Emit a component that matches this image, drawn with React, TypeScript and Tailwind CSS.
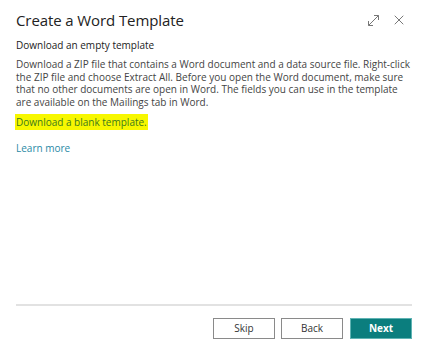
import { X } from "lucide-react";

const lines = [
  "Download a ZIP file that contains a Word document and a data source file. Right-click",
  "the ZIP file and choose Extract All. Before you open the Word document, make sure",
  "that no other documents are open in Word. The fields you can use in the template",
  "are available on the Mailings tab in Word.",
];

const ExpandIcon = () => (
  <svg width="13" height="13" viewBox="0 0 13 13" fill="none" stroke="#777" strokeWidth="1">
    <path d="M1.5 11.5 L11.5 1.5" />
    <path d="M7 1.5 H11.5 V6" />
    <path d="M1.5 7 V11.5 H6" />
  </svg>
);

export default function App() {
  return (
    <div
      className="w-[428px] h-[353px] bg-white flex flex-col text-[#333]"
      style={{ fontFamily: '"Open Sans", "Noto Sans", sans-serif' }}
    >
      {/* header */}
      <div className="flex items-center justify-between pl-4 pr-[21px] pt-[10px] h-[30px]">
        <h1 className="text-[15px] leading-5 text-[#222] tracking-[-0.1px]">Create a Word Template</h1>
        <div className="flex items-center gap-[11px]">
          <ExpandIcon />
          <X size={16} strokeWidth={1.2} color="#555" />
        </div>
      </div>

      {/* body */}
      <div className="flex-1 px-4 pt-[7px]">
        <h2 className="text-[10px] leading-4 text-[#222]">Download an empty template</h2>
        <div className="text-[10px] leading-[12.5px] text-[#444] mt-[5px]">
          {lines.map((l, i) => (
            <div key={i} className="whitespace-nowrap">
              {l}
            </div>
          ))}
        </div>
        <div className="mt-[7px] text-[10px] leading-[14px]">
          <span className="bg-[#f7f700] text-[#3c7a1e] px-[1px] -ml-[1px] py-[1px]">
            Download a blank template.
          </span>
        </div>
        <div className="mt-[11px] text-[10px] leading-4 text-[#2a8aa6]">Learn more</div>
      </div>

      {/* footer */}
      <div className="mx-4 border-t-2 border-[#e2e2e2]" />
      <div className="flex justify-end gap-[6px] pr-4 pt-3 pb-[14px]">
        <button className="w-[62px] h-[21px] border border-[#8a8a8a] bg-white text-[10px] text-[#333]">Skip</button>
        <button className="w-[62px] h-[21px] border border-[#8a8a8a] bg-white text-[10px] text-[#333]">Back</button>
        <button className="w-[62px] h-[21px] border border-[#5fb3b3] bg-[#0b7e7e] text-[10px] font-bold text-white ml-[1px]">
          Next
        </button>
      </div>
    </div>
  );
}
